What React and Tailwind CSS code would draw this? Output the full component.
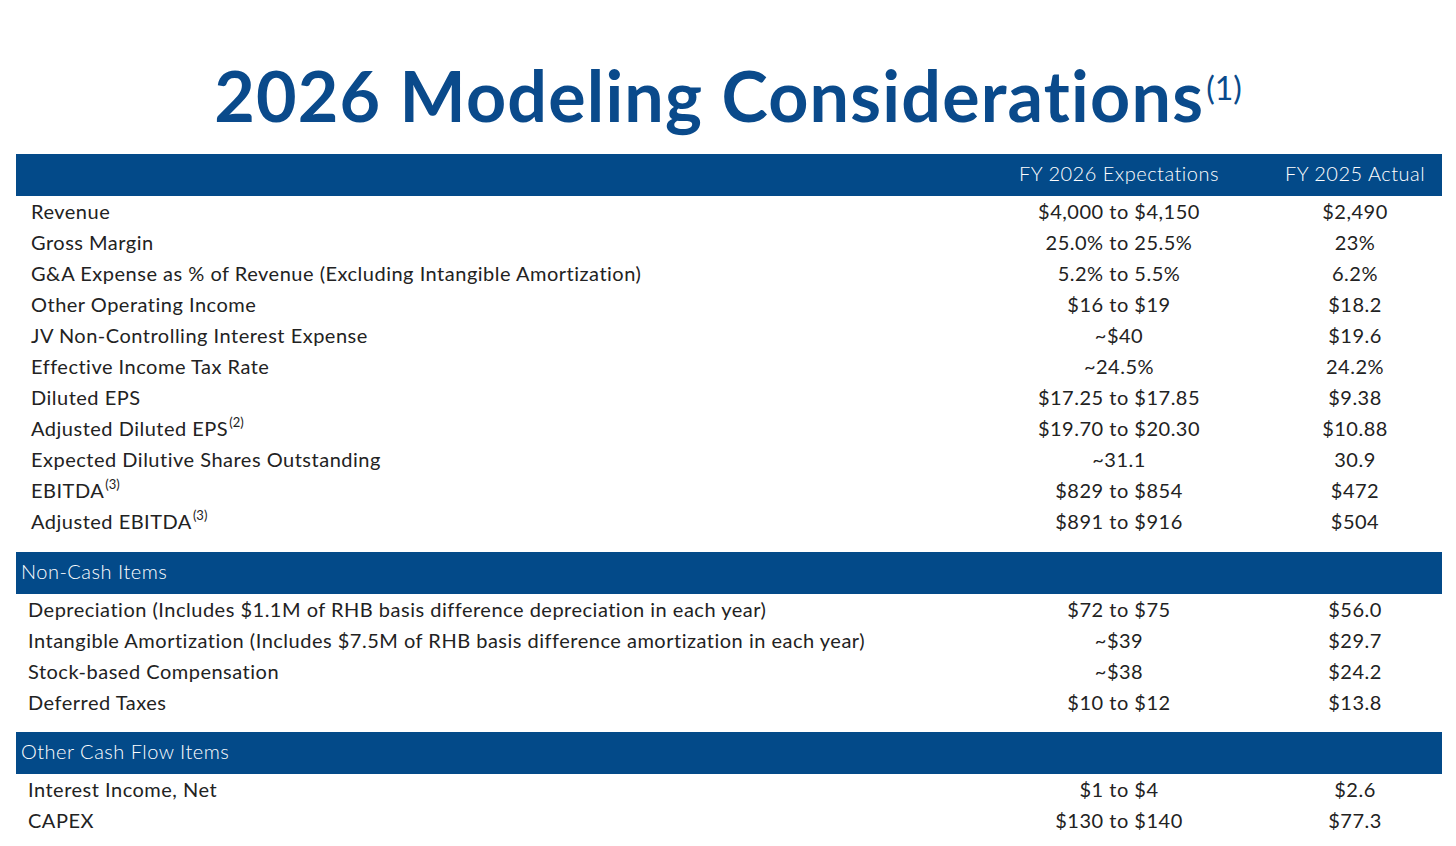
import React from "react";

const mainRows = [
  { label: "Revenue", fy26: "$4,000 to $4,150", fy25: "$2,490" },
  { label: "Gross Margin", fy26: "25.0% to 25.5%", fy25: "23%" },
  {
    label: "G&A Expense as % of Revenue (Excluding Intangible Amortization)",
    fy26: "5.2% to 5.5%",
    fy25: "6.2%",
  },
  { label: "Other Operating Income", fy26: "$16 to $19", fy25: "$18.2" },
  { label: "JV Non-Controlling Interest Expense", fy26: "~$40", fy25: "$19.6" },
  { label: "Effective Income Tax Rate", fy26: "~24.5%", fy25: "24.2%" },
  { label: "Diluted EPS", fy26: "$17.25 to $17.85", fy25: "$9.38" },
  { label: "Adjusted Diluted EPS", note: "(2)", fy26: "$19.70 to $20.30", fy25: "$10.88" },
  { label: "Expected Dilutive Shares Outstanding", fy26: "~31.1", fy25: "30.9" },
  { label: "EBITDA", note: "(3)", fy26: "$829 to $854", fy25: "$472" },
  { label: "Adjusted EBITDA", note: "(3)", fy26: "$891 to $916", fy25: "$504" },
];

const nonCashRows = [
  {
    label: "Depreciation (Includes $1.1M of RHB basis difference depreciation in each year)",
    fy26: "$72 to $75",
    fy25: "$56.0",
  },
  {
    label: "Intangible Amortization (Includes $7.5M of RHB basis difference amortization in each year)",
    fy26: "~$39",
    fy25: "$29.7",
  },
  { label: "Stock-based Compensation", fy26: "~$38", fy25: "$24.2" },
  { label: "Deferred Taxes", fy26: "$10 to $12", fy25: "$13.8" },
];

const otherRows = [
  { label: "Interest Income, Net", fy26: "$1 to $4", fy25: "$2.6" },
  { label: "CAPEX", fy26: "$130 to $140", fy25: "$77.3" },
];

const Row = ({ row, indent }) => (
  <div className="grid grid-cols-[1fr_298px_174px] h-[31px] pb-[4px] items-center text-[20px] tracking-[0.5px] text-[#222]">
    <div className={indent}>
      {row.label}
      {row.note && <sup className="text-[13px] tracking-normal ml-[1px] top-[-0.7em]">{row.note}</sup>}
    </div>
    <div className="text-center">{row.fy26}</div>
    <div className="text-center">{row.fy25}</div>
  </div>
);

const SectionBar = ({ title, className }) => (
  <div className={"bg-[#034a89] h-[42px] pb-[4px] flex items-center pl-[5px] text-white text-[20px] tracking-[0.5px] font-light " + className}>
    {title}
  </div>
);

export default function App() {
  return (
    <div className="w-[1456px] h-[846px] bg-white overflow-hidden" style={{ fontFamily: "Lato, 'Noto Sans', sans-serif" }}>
      <div className="h-[154px] pt-[60px] text-center">
        <h1 className="text-[70px] leading-[70px] font-bold text-[#0a4a8b] tracking-[1.2px]">
          2026 Modeling Considerations
          <span className="text-[32px] leading-none font-normal tracking-normal align-top relative top-[12px] ml-[2px]">(1)</span>
        </h1>
      </div>
      <div className="ml-[16px] w-[1426px]">
        <div className="bg-[#034a89] h-[42px] pb-[4px] grid grid-cols-[1fr_298px_174px] items-center text-white text-[20px] tracking-[0.5px] font-light">
          <div></div>
          <div className="text-center">FY 2026 Expectations</div>
          <div className="text-center">FY 2025 Actual</div>
        </div>
        {mainRows.map((r) => (
          <Row key={r.label} row={r} indent="pl-[15px]" />
        ))}
        <SectionBar title="Non-Cash Items" className="mt-[15px]" />
        {nonCashRows.map((r) => (
          <Row key={r.label} row={r} indent="pl-[12px]" />
        ))}
        <SectionBar title="Other Cash Flow Items" className="mt-[14px]" />
        {otherRows.map((r) => (
          <Row key={r.label} row={r} indent="pl-[12px]" />
        ))}
      </div>
    </div>
  );
}
